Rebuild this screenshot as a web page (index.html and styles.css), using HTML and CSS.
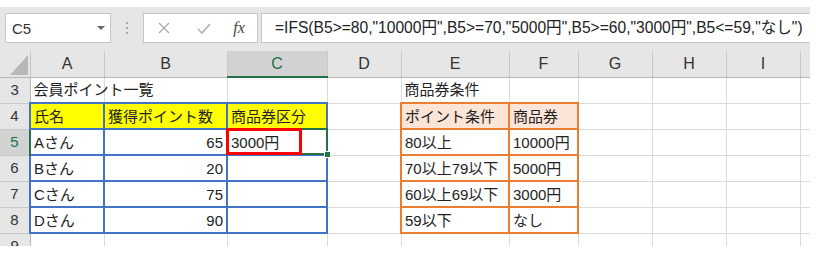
FILE: index.html
```html
<!DOCTYPE html>
<html lang="ja">
<head>
    <meta charset="UTF-8">
    <meta name="viewport" content="width=device-width, initial-scale=1.0">
    <title>IFS関数 商品券区分</title>
    <link rel="stylesheet" href="styles.css">
</head>
<body>
    <div class="app">
        <div class="formula-bar">
            <div class="name-box">
                <span>C5</span>
                <svg class="drop" width="8" height="4" viewBox="0 0 8 4"><path d="M0 0H8L4 4Z" fill="#666"/></svg>
            </div>
            <div class="grip">
                <svg width="3" height="14" viewBox="0 0 3 14">
                    <rect x="0" y="0" width="2" height="2" fill="#aaa"/>
                    <rect x="0" y="5" width="2" height="2" fill="#aaa"/>
                    <rect x="0" y="10" width="2" height="2" fill="#aaa"/>
                </svg>
            </div>
            <div class="fx-buttons">
                <span class="slot">
                    <svg width="12" height="12" viewBox="0 0 12 12"><path d="M1 1L11 11M11 1L1 11" stroke="#ababab" stroke-width="1.3" fill="none"/></svg>
                </span>
                <span class="slot">
                    <svg width="14" height="11" viewBox="0 0 14 11"><path d="M1 6L5 10L13 1" stroke="#ababab" stroke-width="1.5" fill="none"/></svg>
                </span>
                <span class="slot fx">fx</span>
            </div>
            <div class="formula">=IFS(B5&gt;=80,"10000円",B5&gt;=70,"5000円",B5&gt;=60,"3000円",B5&lt;=59,"なし")</div>
        </div>

        <div class="sheet">
            <table class="grid">
                <colgroup>
                    <col style="width:30px">
                    <col style="width:74px">
                    <col style="width:123px">
                    <col style="width:100px">
                    <col style="width:74px">
                    <col style="width:108px">
                    <col style="width:69px">
                    <col style="width:74px">
                    <col style="width:74px">
                    <col style="width:74px">
                    <col style="width:10px">
                </colgroup>
                <tr class="col-head">
                    <th class="corner">
                        <svg width="18" height="20" viewBox="0 0 18 20"><path d="M18 0V20H0Z" fill="#b8b8b8"/></svg>
                    </th>
                    <th>A</th><th>B</th><th class="sel-col">C</th><th>D</th><th>E</th>
                    <th>F</th><th>G</th><th>H</th><th>I</th><th></th>
                </tr>
                <tr>
                    <th class="row-head">3</th>
                    <td>会員ポイント一覧</td><td></td><td></td><td></td>
                    <td>商品券条件</td><td></td><td></td><td></td><td></td><td></td>
                </tr>
                <tr>
                    <th class="row-head">4</th>
                    <td class="blue yellow">氏名</td>
                    <td class="blue yellow">獲得ポイント数</td>
                    <td class="blue yellow">商品券区分</td>
                    <td></td>
                    <td class="orange peach">ポイント条件</td>
                    <td class="orange peach">商品券</td>
                    <td></td><td></td><td></td><td></td>
                </tr>
                <tr>
                    <th class="row-head sel-row">5</th>
                    <td class="blue">Aさん</td>
                    <td class="blue num">65</td>
                    <td class="blue">3000円</td>
                    <td></td>
                    <td class="orange">80以上</td>
                    <td class="orange">10000円</td>
                    <td></td><td></td><td></td><td></td>
                </tr>
                <tr>
                    <th class="row-head">6</th>
                    <td class="blue">Bさん</td>
                    <td class="blue num">20</td>
                    <td class="blue"></td>
                    <td></td>
                    <td class="orange">70以上79以下</td>
                    <td class="orange">5000円</td>
                    <td></td><td></td><td></td><td></td>
                </tr>
                <tr>
                    <th class="row-head">7</th>
                    <td class="blue">Cさん</td>
                    <td class="blue num">75</td>
                    <td class="blue"></td>
                    <td></td>
                    <td class="orange">60以上69以下</td>
                    <td class="orange">3000円</td>
                    <td></td><td></td><td></td><td></td>
                </tr>
                <tr>
                    <th class="row-head">8</th>
                    <td class="blue">Dさん</td>
                    <td class="blue num">90</td>
                    <td class="blue"></td>
                    <td></td>
                    <td class="orange">59以下</td>
                    <td class="orange">なし</td>
                    <td></td><td></td><td></td><td></td>
                </tr>
                <tr>
                    <th class="row-head">9</th>
                    <td></td><td></td><td></td><td></td><td></td>
                    <td></td><td></td><td></td><td></td><td></td>
                </tr>
            </table>

            <div class="selection"><span class="handle"></span></div>
            <div class="mark"></div>
        </div>
    </div>
</body>
</html>
```

FILE: styles.css
```css
body {
    margin: 0;
    background: #fff;
    font-family: "Liberation Sans", "Noto Sans CJK JP", sans-serif;
    color: #222;
}
.app {
    width: 810px;
    height: 239px;
    margin-top: 7px;
    background: #e6e6e6;
    overflow: hidden;
}
.formula-bar {
    display: flex;
    align-items: center;
    height: 30px;
    padding-top: 6px;
    margin-bottom: 8px;
}
.name-box {
    box-sizing: border-box;
    width: 106px;
    height: 30px;
    margin-left: 5px;
    background: #fff;
    border: 1px solid #c6c6c6;
    display: flex;
    align-items: center;
    justify-content: space-between;
    padding: 0 5px 0 6px;
    font-size: 15px;
    color: #333;
}
.grip {
    width: 32px;
    display: flex;
    justify-content: center;
    padding-top: 2px;
}
.fx-buttons {
    box-sizing: border-box;
    width: 115px;
    height: 30px;
    background: #fff;
    border: 1px solid #c6c6c6;
    display: flex;
    align-items: center;
}
.slot {
    width: 40px;
    display: flex;
    justify-content: center;
}
.slot.fx {
    width: 30px;
    font-family: "Liberation Serif", serif;
    font-style: italic;
    font-size: 16px;
    color: #444;
}
.formula {
    box-sizing: border-box;
    flex: 1;
    height: 30px;
    margin-left: 3px;
    background: #fff;
    border: 1px solid #c6c6c6;
    border-right: none;
    padding: 0 0 0 13px;
    font-size: 15.6px;
    line-height: 28px;
    white-space: nowrap;
    overflow: hidden;
    color: #222;
}
.sheet {
    position: relative;
    background: #fff;
}
.grid {
    table-layout: fixed;
    width: 810px;
    border-collapse: collapse;
    font-size: 15px;
    line-height: 20px;
}
.grid tr {
    height: 26px;
}
.grid td,
.grid th {
    padding: 0;
    white-space: nowrap;
}
.grid td {
    border: 1px solid #dadada;
    padding: 1px 3px 0 3px;
}
.col-head th {
    background: #e6e6e6;
    font-weight: normal;
    font-size: 16px;
    color: #333;
    border-left: 1px solid #c8c8c8;
    border-right: 1px solid #c8c8c8;
    border-bottom: 1px solid #b8b8b8;
}
.col-head th.corner {
    text-align: right;
    vertical-align: bottom;
    padding: 0 2px 2px 0;
    border-left: none;
}
.col-head th.corner svg {
    display: block;
    margin-left: auto;
}
.row-head {
    background: #e6e6e6;
    font-weight: normal;
    color: #333;
    border-right: 1px solid #b8b8b8;
    border-bottom: 1px solid #c8c8c8;
}
.sel-col {
    background: #d2d2d2 !important;
    color: #217346 !important;
    border-bottom: 2px solid #217346 !important;
}
.sel-row {
    background: #d2d2d2;
    color: #217346;
    border-right: 2px solid #217346;
}
.grid td.blue {
    border: 2px solid #4472c4;
}
.grid td.orange {
    border: 2px solid #ed7d31;
}
.yellow {
    background: #ffff00;
}
.peach {
    background: #fce4d6;
}
.num {
    text-align: right;
}
.selection {
    position: absolute;
    left: 226px;
    top: 77px;
    width: 98px;
    height: 23px;
    border: 2px solid #217346;
}
.handle {
    position: absolute;
    right: -5px;
    bottom: -5px;
    width: 5px;
    height: 5px;
    background: #217346;
    border: 1px solid #fff;
}
.mark {
    position: absolute;
    left: 226px;
    top: 77px;
    width: 70px;
    height: 21px;
    border: 3px solid #ff0000;
}
```
